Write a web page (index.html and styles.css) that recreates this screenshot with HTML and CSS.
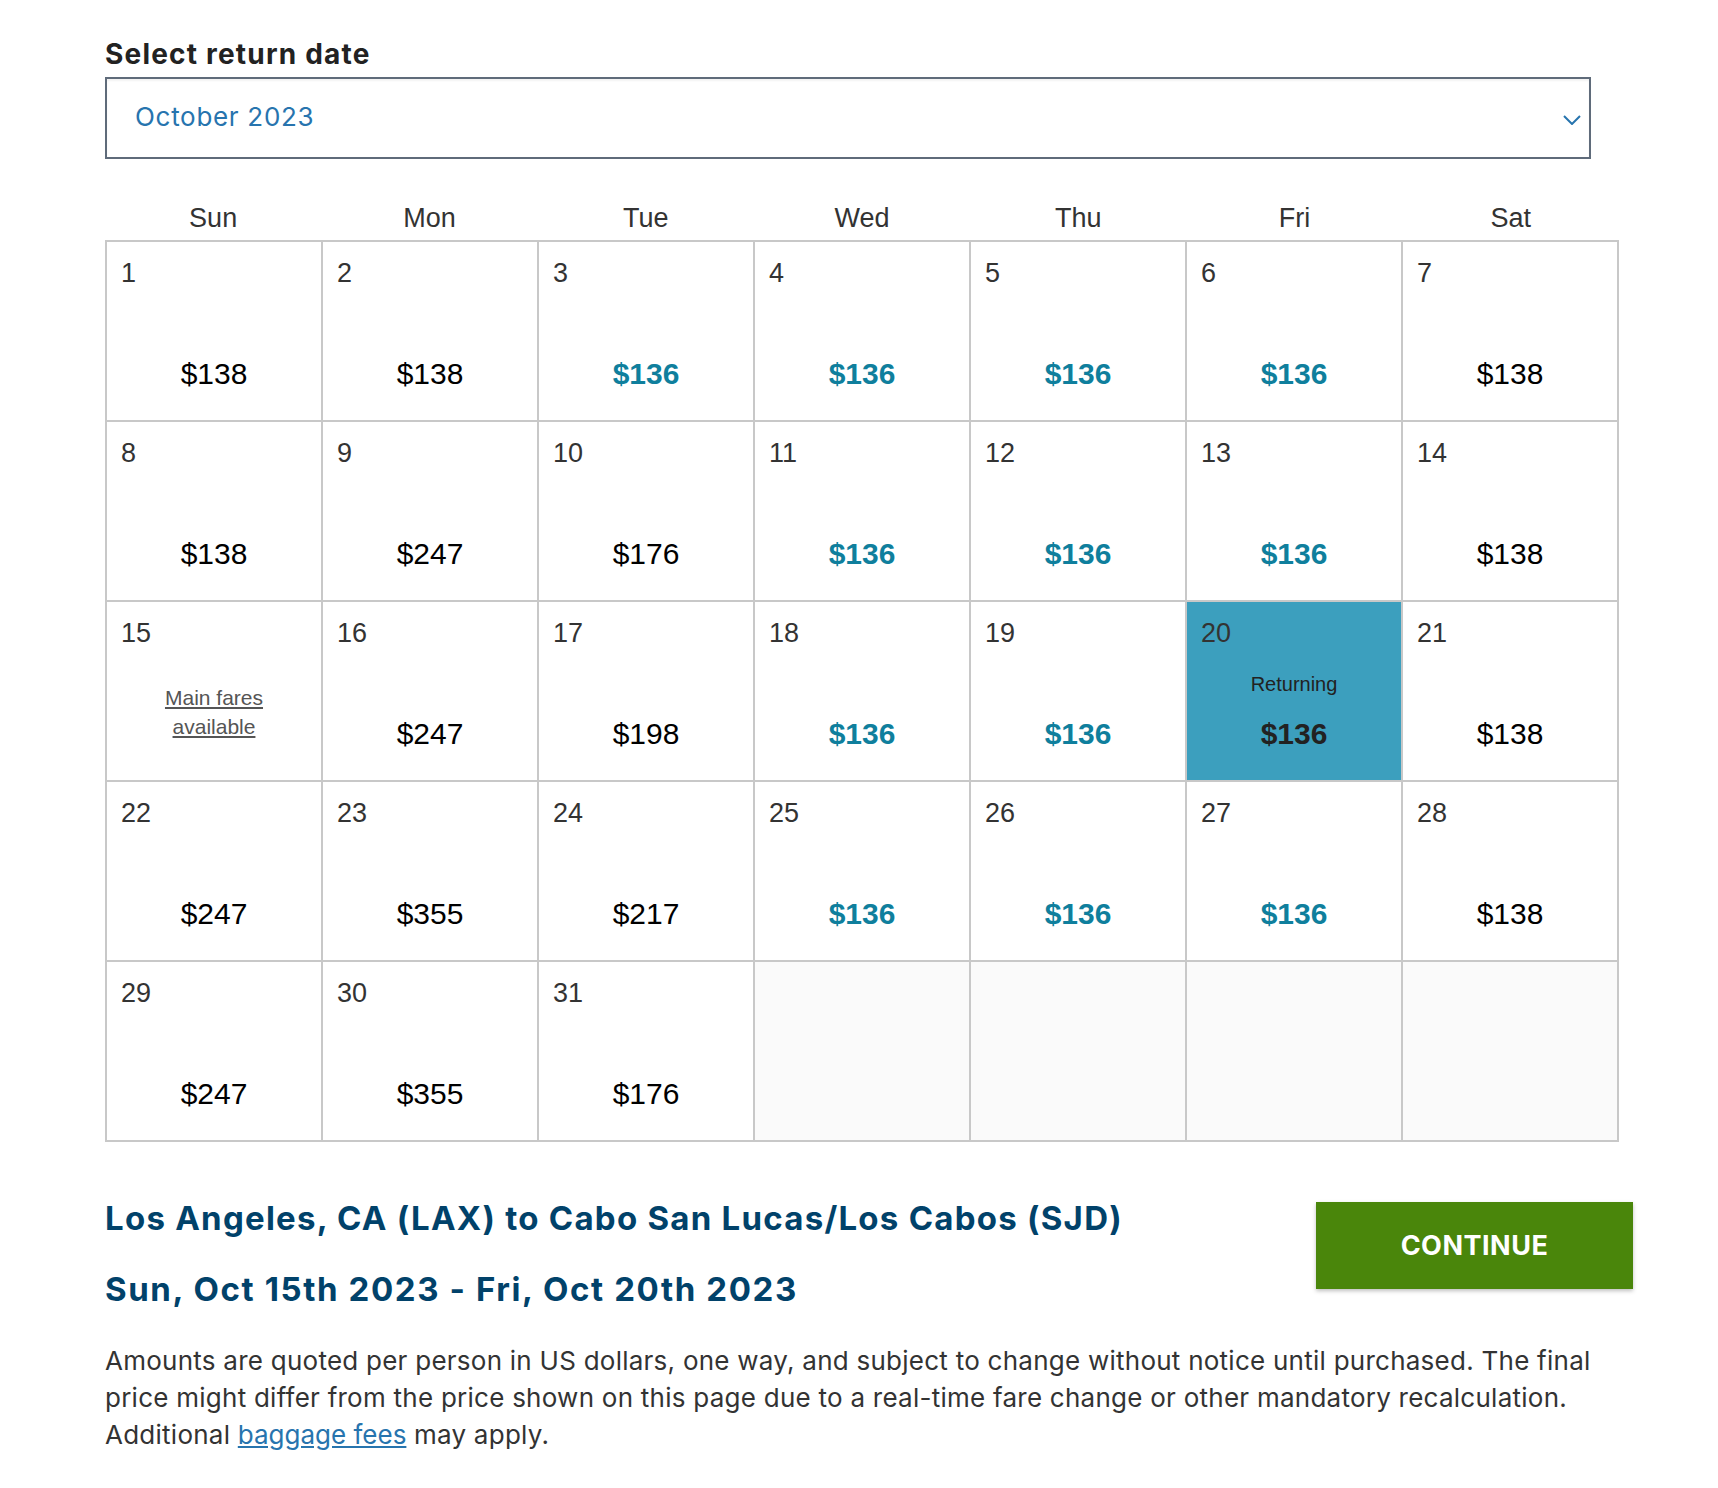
FILE: index.html
```html
<!DOCTYPE html>
<html lang="en">
<head>
    <meta charset="UTF-8">
    <meta name="viewport" content="width=device-width, initial-scale=1.0">
    <title>Select return date</title>
    <link rel="stylesheet" href="styles.css">
</head>
<body>

<main class="page">
    <h2 class="field-label">Select return date</h2>
    <div class="month-select">
        <span class="month-value">October 2023</span>
        <svg class="chevron" width="18" height="10" viewBox="0 0 18 10"><path d="M1 1l8 8 8-8" fill="none" stroke="#2774ae" stroke-width="2"/></svg>
    </div>

    <div class="weekdays">
        <div>Sun</div><div>Mon</div><div>Tue</div><div>Wed</div><div>Thu</div><div>Fri</div><div>Sat</div>
    </div>

    <div class="calendar">
        <!-- week 1 -->
        <div class="day"><span class="date">1</span><div class="fare"><span class="price">$138</span></div></div>
        <div class="day"><span class="date">2</span><div class="fare"><span class="price">$138</span></div></div>
        <div class="day"><span class="date">3</span><div class="fare"><span class="price low">$136</span></div></div>
        <div class="day"><span class="date">4</span><div class="fare"><span class="price low">$136</span></div></div>
        <div class="day"><span class="date">5</span><div class="fare"><span class="price low">$136</span></div></div>
        <div class="day"><span class="date">6</span><div class="fare"><span class="price low">$136</span></div></div>
        <div class="day"><span class="date">7</span><div class="fare"><span class="price">$138</span></div></div>
        <!-- week 2 -->
        <div class="day"><span class="date">8</span><div class="fare"><span class="price">$138</span></div></div>
        <div class="day"><span class="date">9</span><div class="fare"><span class="price">$247</span></div></div>
        <div class="day"><span class="date">10</span><div class="fare"><span class="price">$176</span></div></div>
        <div class="day"><span class="date">11</span><div class="fare"><span class="price low">$136</span></div></div>
        <div class="day"><span class="date">12</span><div class="fare"><span class="price low">$136</span></div></div>
        <div class="day"><span class="date">13</span><div class="fare"><span class="price low">$136</span></div></div>
        <div class="day"><span class="date">14</span><div class="fare"><span class="price">$138</span></div></div>
        <!-- week 3 -->
        <div class="day"><span class="date">15</span><a class="main-fares" href="#">Main fares<br>available</a></div>
        <div class="day"><span class="date">16</span><div class="fare"><span class="price">$247</span></div></div>
        <div class="day"><span class="date">17</span><div class="fare"><span class="price">$198</span></div></div>
        <div class="day"><span class="date">18</span><div class="fare"><span class="price low">$136</span></div></div>
        <div class="day"><span class="date">19</span><div class="fare"><span class="price low">$136</span></div></div>
        <div class="day selected"><span class="date">20</span><div class="fare"><span class="fare-label">Returning</span><span class="price low">$136</span></div></div>
        <div class="day"><span class="date">21</span><div class="fare"><span class="price">$138</span></div></div>
        <!-- week 4 -->
        <div class="day"><span class="date">22</span><div class="fare"><span class="price">$247</span></div></div>
        <div class="day"><span class="date">23</span><div class="fare"><span class="price">$355</span></div></div>
        <div class="day"><span class="date">24</span><div class="fare"><span class="price">$217</span></div></div>
        <div class="day"><span class="date">25</span><div class="fare"><span class="price low">$136</span></div></div>
        <div class="day"><span class="date">26</span><div class="fare"><span class="price low">$136</span></div></div>
        <div class="day"><span class="date">27</span><div class="fare"><span class="price low">$136</span></div></div>
        <div class="day"><span class="date">28</span><div class="fare"><span class="price">$138</span></div></div>
        <!-- week 5 -->
        <div class="day"><span class="date">29</span><div class="fare"><span class="price">$247</span></div></div>
        <div class="day"><span class="date">30</span><div class="fare"><span class="price">$355</span></div></div>
        <div class="day"><span class="date">31</span><div class="fare"><span class="price">$176</span></div></div>
        <div class="day empty"></div>
        <div class="day empty"></div>
        <div class="day empty"></div>
        <div class="day empty"></div>
    </div>

    <div class="summary">
        <div class="trip">
            <h3 class="trip-line">Los Angeles, CA (LAX) to Cabo San Lucas/Los Cabos (SJD)</h3>
            <h3 class="trip-line dates">Sun, Oct 15th 2023 - Fri, Oct 20th 2023</h3>
        </div>
        <button class="continue">CONTINUE</button>
    </div>

    <p class="disclaimer">Amounts are quoted per person in US dollars, one way, and subject to change without notice until purchased. The final price might differ from the price shown on this page due to a real-time fare change or other mandatory recalculation. Additional <a href="#">baggage fees</a> may apply.</p>
</main>

</body>
</html>
```

FILE: styles.css
```css
body {
    margin: 0;
    background-color: #fff;
    font-family: 'Inter', 'Lato', sans-serif;
}

.page {
    width: 1528px;
    padding: 37px 0 40px 105px;
}

.field-label {
    margin: 0 0 6px;
    font-size: 28px;
    font-weight: 700;
    letter-spacing: 1.2px;
    color: #222;
    line-height: 34px;
}

/* month dropdown */
.month-select {
    width: 1486px;
    height: 82px;
    box-sizing: border-box;
    border: 2px solid #5f6b7a;
    box-shadow: inset 0 2px 2px rgba(0, 0, 0, 0.05);
    display: flex;
    align-items: center;
    justify-content: space-between;
    padding: 0 8px 0 28px;
}

.month-value {
    font-size: 26px;
    letter-spacing: 0.7px;
    color: #2774ae;
    margin-top: -4px;
}

.chevron {
    margin-top: 4px;
}

/* calendar */
.weekdays {
    width: 1514px;
    display: grid;
    grid-template-columns: repeat(7, 1fr);
    margin-top: 44px;
    height: 37px;
    font-family: 'Liberation Sans', Arial, sans-serif;
    font-size: 27px;
    color: #333;
    text-align: center;
}

.calendar {
    width: 1514px;
    box-sizing: border-box;
    display: grid;
    grid-template-columns: repeat(7, 214px);
    grid-auto-rows: 178px;
    gap: 2px;
    padding: 2px;
    background-color: #c8c8c8;
    font-family: 'Liberation Sans', Arial, sans-serif;
}

.day {
    background-color: #fff;
    display: flex;
    flex-direction: column;
    padding: 16px 14px 29px;
    box-sizing: border-box;
}

.day.empty {
    background-color: #fafafa;
}

.day.selected {
    background-color: #3c9fbe;
}

.date {
    font-size: 27px;
    color: #333;
    line-height: 31px;
}

.fare {
    margin-top: auto;
    display: flex;
    flex-direction: column;
    align-items: center;
}

.fare-label {
    font-size: 20px;
    color: #222;
    line-height: 24px;
    margin-bottom: 21px;
}

.price {
    font-size: 30px;
    color: #000;
    line-height: 34px;
}

.price.low {
    font-weight: bold;
    color: #0f7f9d;
}

.selected .price.low {
    color: #222;
}

.main-fares {
    margin: auto 0;
    align-self: center;
    text-align: center;
    font-size: 21px;
    line-height: 29px;
    color: #555;
    position: relative;
    top: 12px;
}

/* trip summary */
.summary {
    display: flex;
    justify-content: space-between;
    align-items: flex-start;
    margin-top: 54px;
}

.trip-line {
    margin: 0;
    font-size: 33px;
    line-height: 44px;
    font-weight: 700;
    letter-spacing: 1.25px;
    color: #01426a;
}

.trip-line.dates {
    margin-top: 27px;
    letter-spacing: 1.6px;
}

.continue {
    margin-top: 6px;
    width: 317px;
    height: 87px;
    border: none;
    background-color: #4a860b;
    color: #fff;
    font-family: 'Inter', sans-serif;
    font-size: 27px;
    font-weight: 700;
    letter-spacing: 0.5px;
    box-shadow: 0 2px 4px rgba(0, 0, 0, 0.25);
    cursor: pointer;
}

.disclaimer {
    width: 1500px;
    margin: 31px 0 0;
    font-size: 26px;
    letter-spacing: 0.25px;
    line-height: 37px;
    color: #333;
}

.disclaimer a {
    color: #2774ae;
    letter-spacing: 0;
}
```
